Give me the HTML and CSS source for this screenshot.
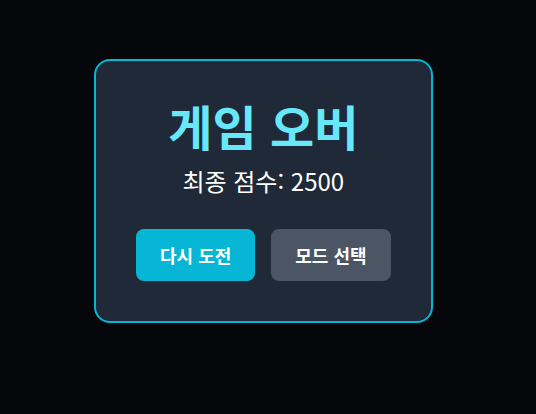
FILE: index.html
```html
<!DOCTYPE html>
<html lang="ko">
<head>
    <title>게임 오버</title>
    <meta name="viewport" content="width=device-width, initial-scale=1.0">
    <link rel="stylesheet" href="styles.css">
</head>
<body>
    <div class="screen">
        <div class="card">
            <h1 class="title">게임 오버</h1>
            <p class="score">최종 점수: 2500</p>
            <div class="actions">
                <button class="btn btn-retry">다시 도전</button>
                <button class="btn btn-mode">모드 선택</button>
            </div>
        </div>
    </div>
</body>
</html>
```

FILE: styles.css
```css
body {
    font-family: "Noto Sans CJK KR", "Noto Sans", sans-serif;
    background-color: #05070b;
    margin: 0;
}

.screen {
    display: flex;
    align-items: flex-start;
    padding: 59px 0 0 94px;
    min-height: 414px;
    box-sizing: border-box;
}

.card {
    display: flex;
    flex-direction: column;
    align-items: center;
    background-color: #1f2937;
    border: 2px solid #06b6d4;
    border-radius: 16px;
    padding: 40px;
}

.title {
    margin: 0 0 16px;
    font-size: 48px;
    line-height: 48px;
    font-weight: 700;
    color: #67e8f9;
}

.score {
    margin: 0 0 32px;
    font-size: 24px;
    line-height: 32px;
    color: #fff;
}

.actions {
    display: flex;
    gap: 16px;
}

.btn {
    font-family: inherit;
    font-size: 18px;
    line-height: 28px;
    font-weight: 700;
    color: #fff;
    border: none;
    border-radius: 8px;
    padding: 12px 24px;
    cursor: pointer;
}

.btn-retry {
    background-color: #06b6d4;
}

.btn-mode {
    background-color: #4b5563;
}
```
